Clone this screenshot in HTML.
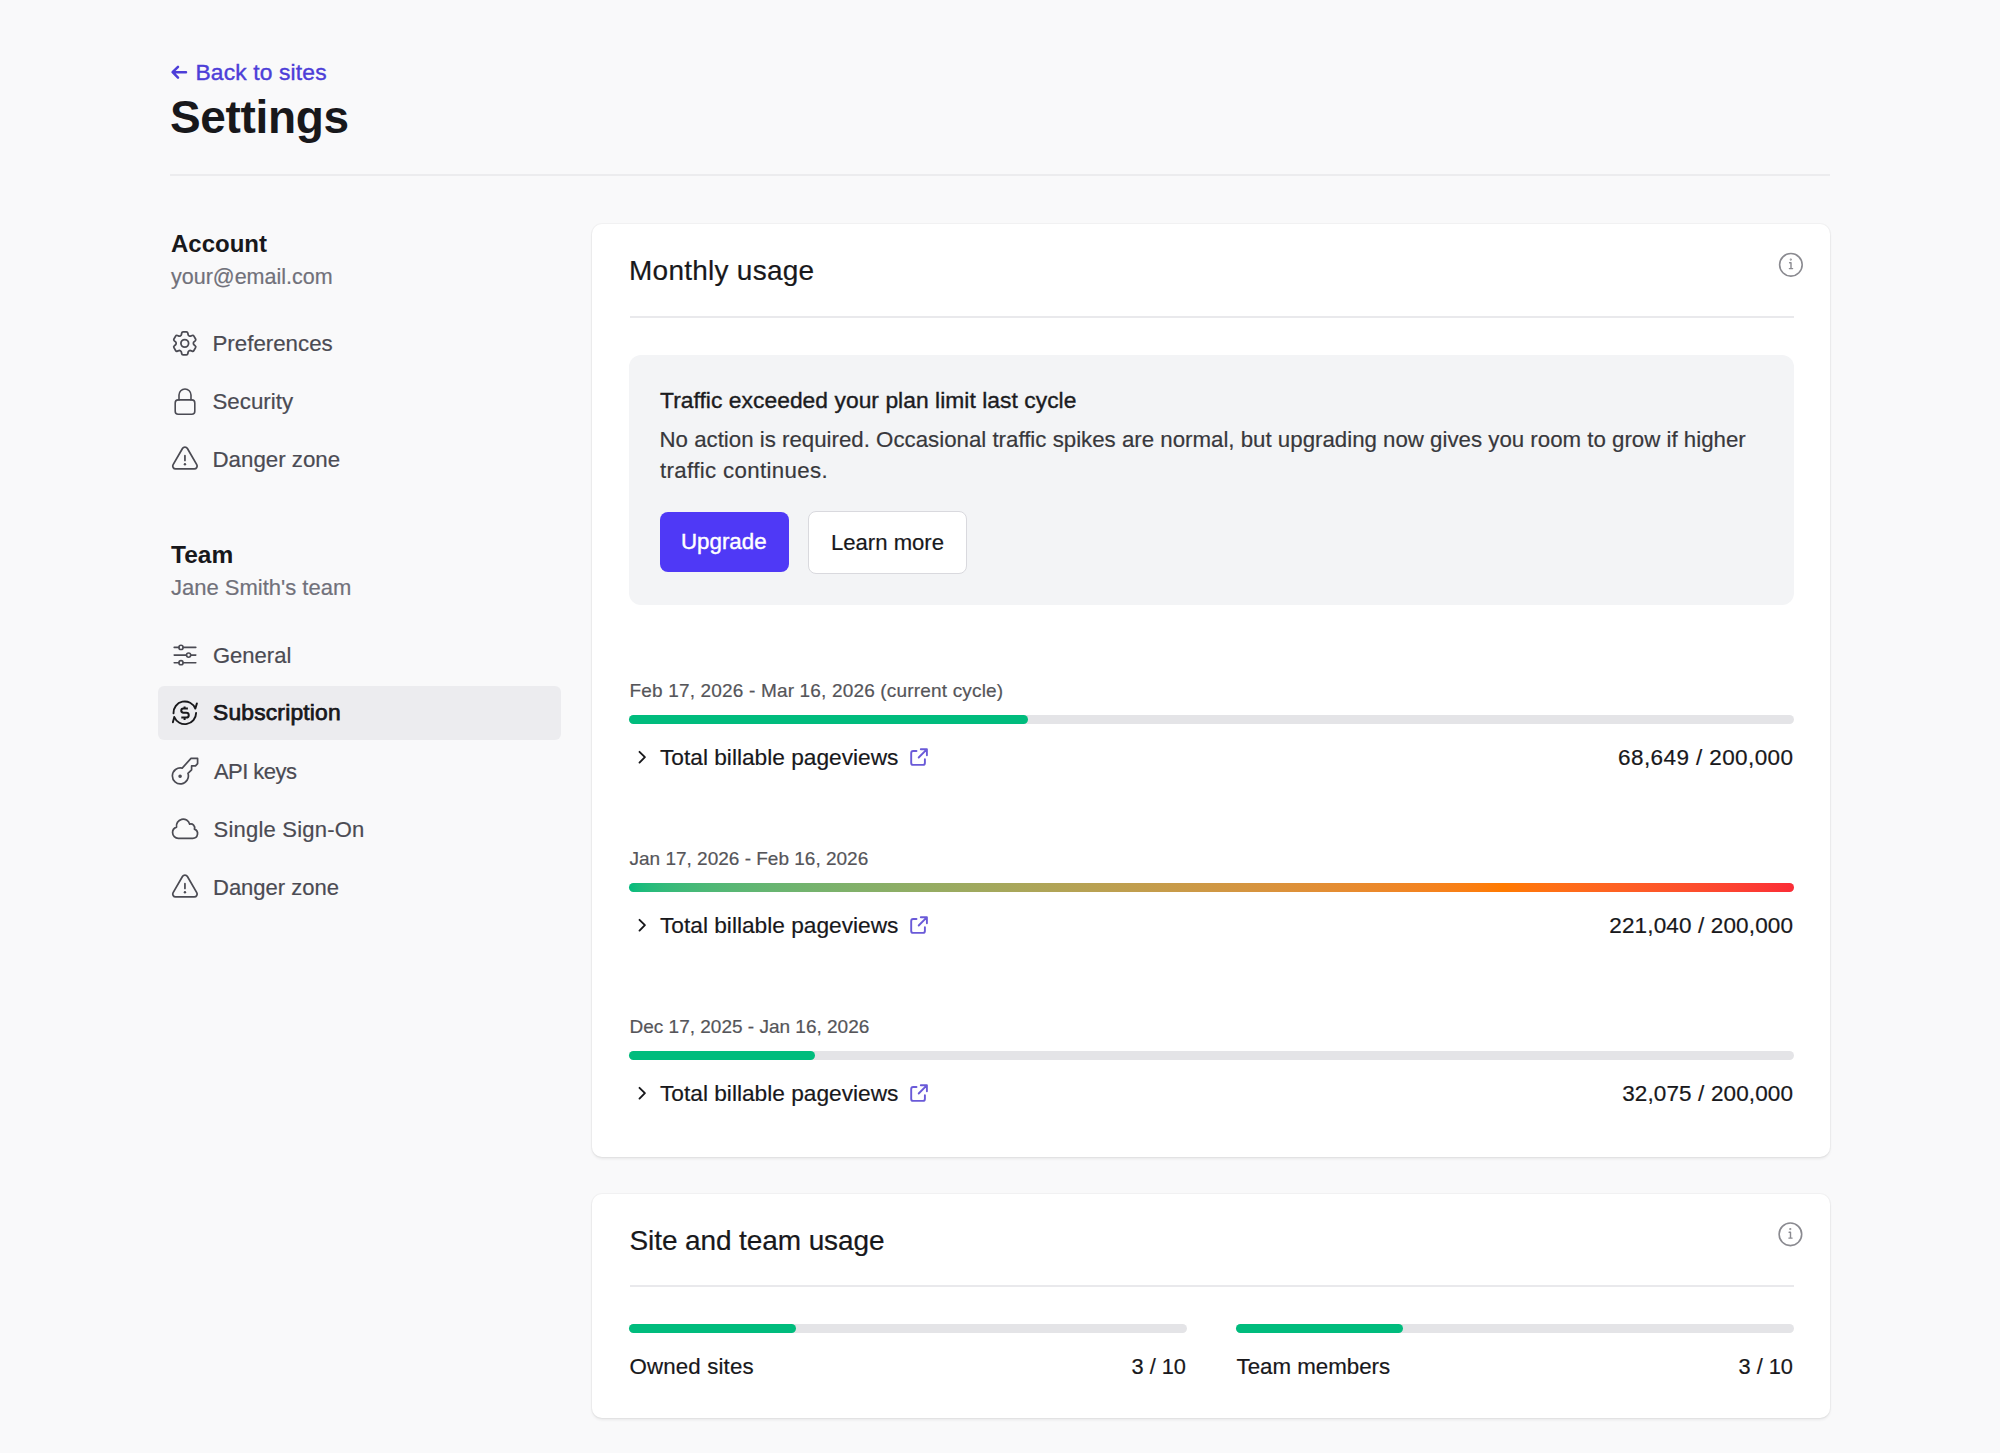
<!DOCTYPE html>
<html><head><meta charset="utf-8"><title>Settings</title>
<style>
html,body{margin:0;padding:0;}
body{width:2000px;height:1453px;overflow:hidden;background:#f9f9fa;position:relative;font-family:"Liberation Sans",sans-serif;}
.t{position:absolute;white-space:nowrap;-webkit-text-stroke:0.2px currentColor;}
.r{position:absolute;box-sizing:border-box;}
.card{position:absolute;background:#fff;border-radius:10px;box-shadow:0 0 0 1px rgba(0,0,0,0.03),0 2px 3px rgba(0,0,0,0.07);}
.ov{position:absolute;left:0;top:0;}
</style></head><body>
<div class="t" style="left:195.5px;top:57.60px;font-size:22.8px;line-height:28px;color:#4d3ed8;letter-spacing:0.15px;-webkit-text-stroke:0.4px #4d3ed8;">Back to sites</div>
<div class="t" style="left:170px;top:88.05px;font-size:46px;line-height:58px;color:#18181b;font-weight:700;-webkit-text-stroke:0;letter-spacing:-0.35px;">Settings</div>
<div class="r" style="left:170px;top:174px;width:1660px;height:2px;background:#ececee"></div>
<div class="t" style="left:171px;top:228.68px;font-size:24px;line-height:30px;color:#18181b;font-weight:700;-webkit-text-stroke:0;">Account</div>
<div class="t" style="left:171px;top:264.05px;font-size:21.5px;line-height:27px;color:#71717a;">your@email.com</div>
<div class="t" style="left:212.5px;top:330.27px;font-size:22.3px;line-height:28px;color:#4b4b53;">Preferences</div>
<div class="t" style="left:212.5px;top:388.27px;font-size:22.3px;line-height:28px;color:#4b4b53;">Security</div>
<div class="t" style="left:212.5px;top:446.27px;font-size:22.3px;line-height:28px;color:#4b4b53;">Danger zone</div>
<div class="t" style="left:171px;top:539.01px;font-size:24.5px;line-height:31px;color:#18181b;font-weight:700;-webkit-text-stroke:0;">Team</div>
<div class="t" style="left:171px;top:573.77px;font-size:22px;line-height:28px;color:#71717a;">Jane Smith's team</div>
<div class="r" style="left:158px;top:686px;width:403px;height:54px;background:#ececef;border-radius:6px"></div>
<div class="t" style="left:213px;top:642.37px;font-size:22px;line-height:28px;color:#4b4b53;">General</div>
<div class="t" style="left:214px;top:758.37px;font-size:22px;line-height:28px;color:#4b4b53;letter-spacing:-0.55px;">API keys</div>
<div class="t" style="left:213.5px;top:816.37px;font-size:22px;line-height:28px;color:#4b4b53;letter-spacing:0.22px;">Single Sign-On</div>
<div class="t" style="left:213px;top:874.37px;font-size:22px;line-height:28px;color:#4b4b53;">Danger zone</div>
<div class="t" style="left:213px;top:698.20px;font-size:22.8px;line-height:28px;color:#18181b;letter-spacing:0.2px;-webkit-text-stroke:0.75px #18181b;">Subscription</div>
<div class="card" style="left:592px;top:224px;width:1238px;height:933px"></div>
<div class="t" style="left:629px;top:253.04px;font-size:28px;line-height:35px;color:#18181b;letter-spacing:0.25px;">Monthly usage</div>
<div class="r" style="left:630px;top:316px;width:1164px;height:2px;background:#e9e9ec"></div>
<div class="r" style="left:628.5px;top:354.5px;width:1165.5px;height:250px;background:#f3f4f6;border-radius:12px"></div>
<div class="t" style="left:660px;top:386.10px;font-size:22.8px;line-height:28px;color:#1c1c1f;letter-spacing:0.05px;-webkit-text-stroke:0.38px #1c1c1f;">Traffic exceeded your plan limit last cycle</div>
<div class="t" style="left:659.5px;top:426.28px;font-size:22.27px;line-height:28px;color:#38383c;">No action is required. Occasional traffic spikes are normal, but upgrading now gives you room to grow if higher</div>
<div class="t" style="left:660px;top:456.78px;font-size:22.27px;line-height:28px;color:#38383c;letter-spacing:0.35px;">traffic continues.</div>
<div class="r" style="left:660px;top:512px;width:129px;height:60px;background:#4f39f6;border-radius:8px"></div>
<div class="t" style="left:681px;top:528.47px;font-size:22.3px;line-height:28px;color:#ffffff;-webkit-text-stroke:0.4px #ffffff;">Upgrade</div>
<div class="r" style="left:808px;top:510.5px;width:159px;height:63px;background:#fff;border:1px solid #d9d9de;border-radius:8px"></div>
<div class="t" style="left:831px;top:528.54px;font-size:22.1px;line-height:28px;color:#18181b;">Learn more</div>
<div class="t" style="left:629.5px;top:678.61px;font-size:19px;line-height:24px;color:#555559;letter-spacing:0.17px;">Feb 17, 2026 - Mar 16, 2026 (current cycle)</div>
<div class="r" style="left:629px;top:714.5px;width:1165px;height:9px;background:#e4e4e7;border-radius:5px"></div>
<div class="r" style="left:629px;top:714.5px;width:399px;height:9px;background:#00bc7d;border-radius:5px"></div>
<div class="t" style="left:660px;top:742.93px;font-size:22.7px;line-height:28px;color:#18181b;">Total billable pageviews</div>
<div class="t" style="left:1793.4px;top:744.20px;font-size:22.5px;line-height:28px;color:#18181b;letter-spacing:0.4px;transform:translateX(-100%);">68,649 / 200,000</div>
<div class="t" style="left:629.5px;top:846.61px;font-size:19px;line-height:24px;color:#555559;">Jan 17, 2026 - Feb 16, 2026</div>
<div class="r" style="left:629px;top:882.5px;width:1165px;height:9px;background:#e4e4e7;border-radius:5px"></div>
<div class="r" style="left:629px;top:882.5px;width:1165px;height:9px;background:linear-gradient(to right in oklab,#00bc7d 0%,#ff7a00 75%,#fb2c36 100%);border-radius:5px"></div>
<div class="t" style="left:660px;top:910.93px;font-size:22.7px;line-height:28px;color:#18181b;">Total billable pageviews</div>
<div class="t" style="left:1793.14px;top:912.20px;font-size:22.5px;line-height:28px;color:#18181b;letter-spacing:0.14px;transform:translateX(-100%);">221,040 / 200,000</div>
<div class="t" style="left:629.5px;top:1014.61px;font-size:19px;line-height:24px;color:#555559;">Dec 17, 2025 - Jan 16, 2026</div>
<div class="r" style="left:629px;top:1050.5px;width:1165px;height:9px;background:#e4e4e7;border-radius:5px"></div>
<div class="r" style="left:629px;top:1050.5px;width:186px;height:9px;background:#00bc7d;border-radius:5px"></div>
<div class="t" style="left:660px;top:1078.93px;font-size:22.7px;line-height:28px;color:#18181b;">Total billable pageviews</div>
<div class="t" style="left:1793.13px;top:1080.20px;font-size:22.5px;line-height:28px;color:#18181b;letter-spacing:0.13px;transform:translateX(-100%);">32,075 / 200,000</div>
<div class="card" style="left:592px;top:1194px;width:1238px;height:224px"></div>
<div class="t" style="left:629.5px;top:1222.79px;font-size:28px;line-height:35px;color:#18181b;letter-spacing:-0.1px;">Site and team usage</div>
<div class="r" style="left:630px;top:1285px;width:1164px;height:2px;background:#e9e9ec"></div>
<div class="r" style="left:629px;top:1323.5px;width:558px;height:9px;background:#e4e4e7;border-radius:5px"></div>
<div class="r" style="left:629px;top:1323.5px;width:167px;height:9px;background:#00bc7d;border-radius:5px"></div>
<div class="t" style="left:629.5px;top:1352.77px;font-size:22.3px;line-height:28px;color:#18181b;letter-spacing:0.14px;">Owned sites</div>
<div class="t" style="left:1186px;top:1352.94px;font-size:21.8px;line-height:27px;color:#18181b;transform:translateX(-100%);">3 / 10</div>
<div class="r" style="left:1236px;top:1323.5px;width:558px;height:9px;background:#e4e4e7;border-radius:5px"></div>
<div class="r" style="left:1236px;top:1323.5px;width:167px;height:9px;background:#00bc7d;border-radius:5px"></div>
<div class="t" style="left:1236.5px;top:1352.77px;font-size:22.3px;line-height:28px;color:#18181b;">Team members</div>
<div class="t" style="left:1793px;top:1352.94px;font-size:21.8px;line-height:27px;color:#18181b;transform:translateX(-100%);">3 / 10</div>

<svg class="ov" width="2000" height="1453" viewBox="0 0 2000 1453" fill="none" stroke-linecap="round" stroke-linejoin="round">
 <!-- back arrow -->
 <path d="M178 66.8 L172.6 72.2 L178 77.6 M173 72.2 H186" stroke="#4d3ed8" stroke-width="2.5"/>
 <!-- gear -->
 <g transform="translate(169.4 328) scale(1.28)" stroke="#4b4b53" stroke-width="1.38">
  <path d="M9.594 3.94c.09-.542.56-.94 1.11-.94h2.593c.55 0 1.02.398 1.11.94l.213 1.281c.063.374.313.686.645.87.074.04.147.083.22.127.325.196.72.257 1.075.124l1.217-.456a1.125 1.125 0 0 1 1.37.49l1.296 2.247a1.125 1.125 0 0 1-.26 1.431l-1.003.827c-.293.241-.438.613-.43.992a7.723 7.723 0 0 1 0 .255c-.008.378.137.75.43.991l1.004.827c.424.35.534.955.26 1.43l-1.298 2.247a1.125 1.125 0 0 1-1.369.491l-1.217-.456c-.355-.133-.75-.072-1.076.124a6.47 6.47 0 0 1-.22.128c-.331.183-.581.495-.644.869l-.213 1.281c-.09.543-.56.94-1.11.94h-2.594c-.55 0-1.019-.398-1.11-.94l-.213-1.281c-.062-.374-.312-.686-.644-.87a6.52 6.52 0 0 1-.22-.127c-.325-.196-.72-.257-1.076-.124l-1.217.456a1.125 1.125 0 0 1-1.369-.49l-1.297-2.247a1.125 1.125 0 0 1 .26-1.431l1.004-.827c.292-.24.437-.613.43-.991a6.932 6.932 0 0 1 0-.255c.007-.38-.138-.751-.43-.992l-1.004-.827a1.125 1.125 0 0 1-.26-1.43l1.297-2.247a1.125 1.125 0 0 1 1.37-.491l1.216.456c.356.133.751.072 1.076-.124.072-.044.146-.086.22-.128.332-.183.582-.495.644-.869l.214-1.28Z"/>
  <path d="M15 12a3 3 0 1 1-6 0 3 3 0 0 1 6 0Z"/>
 </g>
 <!-- lock -->
 <path d="M179 400 V395 a6 6 0 0 1 12 0 V400" stroke="#4b4b53" stroke-width="1.6"/>
 <rect x="175.2" y="399.9" width="19.6" height="14.4" rx="3" stroke="#4b4b53" stroke-width="1.6"/>
 <!-- triangles -->
 <g transform="translate(169.7 444.2) scale(1.27)" stroke="#4b4b53" stroke-width="1.36"><path d="M12 9v3.75m-9.303 3.376c-.866 1.5.217 3.374 1.948 3.374h14.71c1.73 0 2.813-1.874 1.948-3.374L13.949 3.378c-.866-1.5-3.032-1.5-3.898 0L2.697 16.126Z"/></g>
 <circle cx="184.94" cy="464.3" r="1.2" fill="#4b4b53"/>
 <g transform="translate(169.7 872.2) scale(1.27)" stroke="#4b4b53" stroke-width="1.36"><path d="M12 9v3.75m-9.303 3.376c-.866 1.5.217 3.374 1.948 3.374h14.71c1.73 0 2.813-1.874 1.948-3.374L13.949 3.378c-.866-1.5-3.032-1.5-3.898 0L2.697 16.126Z"/></g>
 <circle cx="184.94" cy="892.3" r="1.2" fill="#4b4b53"/>
 <!-- sliders -->
 <g stroke="#4b4b53" stroke-width="1.6">
  <path d="M174.2 647.4 H179 M183.1 647.4 H195.8"/><circle cx="181" cy="647.4" r="2.1"/>
  <path d="M174.2 655.1 H186.5 M190.7 655.1 H195.8"/><circle cx="188.6" cy="655.1" r="2.1"/>
  <path d="M174.2 662.7 H179 M183.1 662.7 H195.8"/><circle cx="181" cy="662.7" r="2.1"/>
 </g>
 <!-- subscription -->
 <g stroke="#18181b" stroke-width="1.9">
  <path d="M173.5 713.3 A11.3 11.3 0 0 1 195.3 708.6 L196.9 703.4"/>
  <path d="M196.1 712.9 A11.3 11.3 0 0 1 174.3 717.0 L172.9 722.3"/>
  <path d="M187.9 708.4 H183.4 A2.15 2.15 0 0 0 183.4 712.7 H186.3 A2.45 2.45 0 0 1 186.3 717.6 H181.3 M184.6 706.4 V708.4 M184.6 717.6 V719.9" stroke-linecap="butt" stroke-linejoin="miter" stroke-width="2"/>
 </g>
 <!-- key -->
 <path d="M191 758.4 H197.6 V763.6 L195.5 765.9 H191.6 V769.8 L187.96 773.3 A8 8 0 1 1 182.2 768.1 Z" stroke="#4b4b53" stroke-width="1.7"/>
 <circle cx="180.1" cy="776.2" r="1.1" fill="#4b4b53" stroke="#4b4b53" stroke-width="1.4"/>
 <!-- cloud -->
 <g transform="translate(169.7 813.4) scale(1.28)" stroke="#4b4b53" stroke-width="1.35">
  <path d="M2.25 15a4.5 4.5 0 0 0 4.5 4.5H18a3.75 3.75 0 0 0 1.332-7.257 3 3 0 0 0-3.758-3.848 5.25 5.25 0 0 0-10.233 2.33A4.502 4.502 0 0 0 2.25 15Z"/>
 </g>
 <!-- info icons -->
 <g stroke="#8a8a90" stroke-width="1.6">
  <circle cx="1790.9" cy="264.8" r="11.3"/>
  <path d="M1789.6 262.8 H1791 V268.6 M1789.4 268.6 H1792.6" stroke-width="1.4"/>
  <circle cx="1790.8" cy="259.6" r="0.4" stroke-width="1.4"/>
 </g>
 <g stroke="#8a8a90" stroke-width="1.6" transform="translate(-0.5 969.5)">
  <circle cx="1790.9" cy="264.8" r="11.3"/>
  <path d="M1789.6 262.8 H1791 V268.6 M1789.4 268.6 H1792.6" stroke-width="1.4"/>
  <circle cx="1790.8" cy="259.6" r="0.4" stroke-width="1.4"/>
 </g>

 <path d="M639.5 751.8 L644.9 757.2 L639.5 762.6" stroke="#18181b" stroke-width="1.9"/>
 <g stroke="#6a5ad8" stroke-width="1.9">
  <path d="M916.5 751 H913.2 A2 2 0 0 0 911.2 753 V762.9 A2 2 0 0 0 913.2 764.9 H922.9 A2 2 0 0 0 924.9 762.9 V759.3"/>
  <path d="M918.7 757.5 L926.8 749.4 M920.8 749.2 H926.9 V755.3"/>
 </g>
 <path d="M639.5 919.8 L644.9 925.2 L639.5 930.6" stroke="#18181b" stroke-width="1.9"/>
 <g stroke="#6a5ad8" stroke-width="1.9">
  <path d="M916.5 919 H913.2 A2 2 0 0 0 911.2 921 V930.9 A2 2 0 0 0 913.2 932.9 H922.9 A2 2 0 0 0 924.9 930.9 V927.3"/>
  <path d="M918.7 925.5 L926.8 917.4 M920.8 917.2 H926.9 V923.3"/>
 </g>
 <path d="M639.5 1087.8 L644.9 1093.2 L639.5 1098.6" stroke="#18181b" stroke-width="1.9"/>
 <g stroke="#6a5ad8" stroke-width="1.9">
  <path d="M916.5 1087 H913.2 A2 2 0 0 0 911.2 1089 V1098.9 A2 2 0 0 0 913.2 1100.9 H922.9 A2 2 0 0 0 924.9 1098.9 V1095.3"/>
  <path d="M918.7 1093.5 L926.8 1085.4 M920.8 1085.2 H926.9 V1091.3"/>
 </g>
</svg>
</body></html>
